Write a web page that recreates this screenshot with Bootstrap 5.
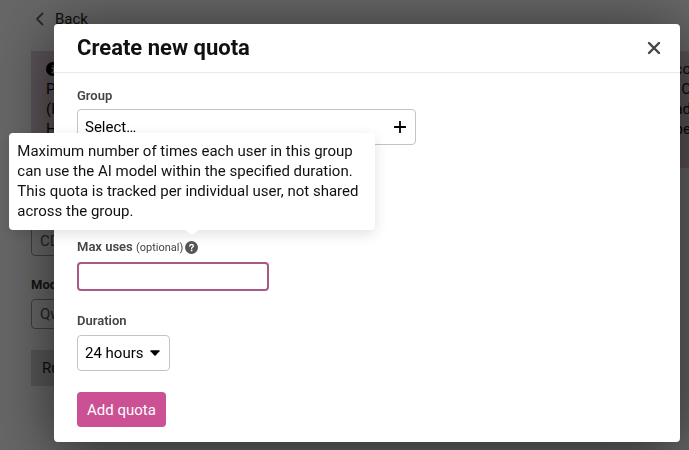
<!DOCTYPE html>
<html lang="en">
<head>
<meta charset="utf-8">
<meta name="viewport" content="width=device-width, initial-scale=1">
<title>Create new quota</title>
<link href="https://cdn.jsdelivr.net/npm/bootstrap@5.3.0/dist/css/bootstrap.min.css" rel="stylesheet">
<style>
  body { font-family: Roboto, "Liberation Sans", sans-serif; font-size: 15px; line-height: 20px; color: #111; overflow: hidden; }
  .page-behind { padding: 9px 0 0 31px; }
  .back-link { gap: 10px; color: #222; }
  .notice { margin: 22px -2px 0 0; padding: 8px 0 0 15px; height: 117px; background: #e2ced9; white-space: nowrap; }
  .ghost-input { width: 300px; height: 30px; margin-top: 58px; padding: 4px 8px; border: 1px solid #999; border-radius: 4px; background: transparent; color: #555; }
  .ghost-label { margin: 19px 0 4px; font-weight: 700; font-size: 13px; color: #333; }
  .ghost-label + .ghost-input { margin-top: 0; }
  .run-btn { margin-top: 21px; padding: 8px 11px; border: 0; background: #d8d8d8; color: #222; }
  .modal-backdrop { --bs-backdrop-opacity: .6; }
  .quota-dialog { max-width: none; margin: 24px 9px 8px 54px; }
  .quota-dialog .modal-content { border: 0; border-radius: 4px; box-shadow: 0 8px 60px rgba(0, 0, 0, .6); }
  .quota-dialog .modal-header { padding: 10px 18px 10px 23px; border-color: #e9e9e9; }
  .quota-dialog .modal-title { font-size: 22px; line-height: 28px; font-weight: 700; color: #111; }
  .quota-dialog .modal-body { padding: 13px 23px 15px; }
  .close-btn { width: 16px; height: 16px; line-height: 0; }
  .field-label { font-size: 13px; line-height: 20px; font-weight: 600; color: #444; }
  .optional { font-size: 11px; font-weight: 400; }
  .pick { height: 36px; padding: 0 32px 0 7px; border: 1px solid #c4c4c4; border-radius: 4px; font-size: 15px; color: #000; }
  .pick-group { width: 339px; max-width: 100%; background: #fff url("data:image/svg+xml,%3Csvg xmlns='http://www.w3.org/2000/svg' viewBox='0 0 12 12'%3E%3Cpath d='M6 .5v11M.5 6h11' stroke='%23000' stroke-width='1.8' stroke-linecap='round'/%3E%3C/svg%3E") no-repeat right 9px center / 12px; margin-bottom: 92px; margin-top: 3px; }
  .pick-duration { width: 93px; margin-top: 4px; background: #fff url("data:image/svg+xml,%3Csvg xmlns='http://www.w3.org/2000/svg' viewBox='0 0 10 6'%3E%3Cpath d='M1 .3h8q1 .1.5.9L5.6 5.4q-.6.5-1.2 0L.5 1.2Q0 .4 1 .3z'/%3E%3C/svg%3E") no-repeat right 9px center / 10px 6px; padding-right: 20px; }
  .uses-input { width: 192px; height: 29px; margin: 4px 0 20px; padding: 4px 8px; border: 2px solid #a85a87; border-radius: 4px; font-size: 15px; }
  .uses-input:focus { border-color: #a85a87; box-shadow: none; }
  .help { width: 13px; height: 13px; margin-left: 2px; line-height: 0; }
  .help-tip { position: absolute; z-index: 5; width: 366px; left: -174px; bottom: 24px; padding: 8px 8px 9px; border-radius: 4px; background: #fff; box-shadow: 0 4px 14px rgba(0, 0, 0, .12); font-size: 15px; line-height: 20px; font-weight: 400; color: #111; }
  .help-tip::after { content: ""; position: absolute; top: 100%; left: 176px; border: 7px solid transparent; border-top: 5px solid #fff; border-bottom: 0; }
  .add-btn { margin-top: 21px; padding: 8px 10px 7px; border: 0; border-radius: 4px; background: #cb5094; color: #fff; font-size: 15px; line-height: 20px; }
</style>
<script src="https://cdn.jsdelivr.net/npm/bootstrap@5.3.0/dist/js/bootstrap.bundle.min.js"></script>
</head>
<body>
<main class="page-behind">
  <a href="#" class="back-link d-flex align-items-center text-decoration-none">
    <svg width="14" height="14" viewBox="0 0 14 14" fill="none" stroke="#666" stroke-width="1.8" stroke-linecap="round" stroke-linejoin="round"><path d="M11.500 1.500 6 7l5.500 5.500"/></svg>
    <span>Back</span>
  </a>
  <section class="notice">
    <div class="d-flex justify-content-between align-items-center">
      <svg width="14" height="14" viewBox="0 0 14 14"><circle cx="7" cy="7" r="7"/><path d="M5.500 6H7.500v4.500M5.500 10.500h4M7 3v1.500" stroke="#e2ced9" stroke-width="1.600" fill="none"/></svg>
      <span>co</span>
    </div>
    <div class="d-flex justify-content-between"><span>P</span><span>C</span></div>
    <div class="d-flex justify-content-between"><span>(P</span><span>ad</span></div>
    <div class="d-flex justify-content-between"><span>H</span><span>be</span></div>
  </section>
  <input class="ghost-input d-block" type="text" value="CD" aria-label="Provider">
  <label class="ghost-label d-block" for="model">Mod</label>
  <input class="ghost-input d-block" id="model" type="text" value="Qw">
  <button class="run-btn" type="button">Ru</button>
</main>

<div class="modal-backdrop show"></div>
<div class="modal d-block" role="dialog" aria-modal="true" aria-labelledby="quota-title">
  <div class="modal-dialog quota-dialog">
    <form class="modal-content">
      <div class="modal-header">
        <h1 class="modal-title" id="quota-title">Create new quota</h1>
        <button type="button" class="close-btn btn p-0 border-0" aria-label="Close">
          <svg width="16" height="16" viewBox="0 0 16 16" stroke="#444" stroke-width="2.400" stroke-linecap="round"><path d="m3 3 10 10M13 3 3 13"/></svg>
        </button>
      </div>
      <div class="modal-body">
        <label class="field-label d-block" for="group">Group</label>
        <select class="pick pick-group form-select" id="group"><option>Select…</option></select>

        <div class="d-flex align-items-center">
          <label class="field-label" for="uses">Max uses <span class="optional">(optional)</span></label>
          <span class="position-relative">
            <button type="button" class="help btn d-block p-0 border-0" aria-label="Help" aria-describedby="uses-tip">
              <svg width="13" height="13" viewBox="0 0 13 13"><circle cx="6.500" cy="6.500" r="6.500" fill="#555"/><path d="M4.700 5c.1-1 .8-1.500 1.800-1.500 1.100 0 1.900.6 1.900 1.500 0 1.200-1.800 1.200-1.800 2.400" fill="none" stroke="#fff" stroke-width="1.300" stroke-linecap="round"/><circle cx="6.600" cy="9.400" r=".9" fill="#fff"/></svg>
            </button>
            <div class="help-tip" id="uses-tip" role="tooltip">Maximum number of times each user in this group can use the AI model within the specified duration. This quota is tracked per individual user, not shared across the group.</div>
          </span>
        </div>
        <input class="uses-input form-control" id="uses" type="text">

        <label class="field-label d-block" for="duration">Duration</label>
        <select class="pick pick-duration form-select" id="duration"><option>24 hours</option></select>
        <button type="button" class="add-btn btn">Add quota</button>
      </div>
    </form>
  </div>
</div>
</body>
</html>
